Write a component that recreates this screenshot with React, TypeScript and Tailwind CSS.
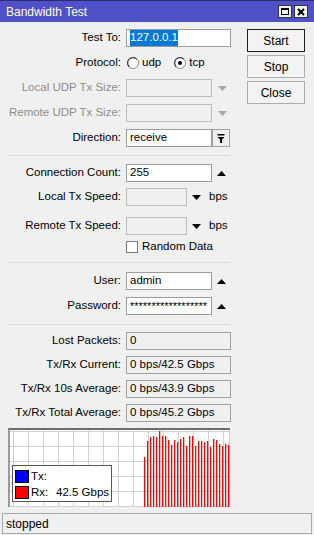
import { ReactNode } from "react";
import clsx from "clsx";

const rxBars = [27, 11, 7, 6, 7, 1, 6, 6, 10, 15, 10, 12, 9, 7, 16, 6, 6, 16, 11, 11, 12, 11, 17, 9, 10, 14, 16, 14, 15];

const Tri = ({ up, gray }: { up?: boolean; gray?: boolean }) => (
  <svg width="9" height="5" viewBox="0 0 9 5" className="shrink-0">
    <polygon
      points={up ? "0,5 9,5 4.5,0" : "0,0 9,0 4.5,5"}
      fill={gray ? "#a8a8a8" : "#000"}
    />
  </svg>
);

const Label = ({ children, disabled }: { children: ReactNode; disabled?: boolean }) => (
  <div className={clsx("w-[121px] shrink-0 text-right whitespace-nowrap", disabled && "text-[#8d8d8d]")}>
    {children}
  </div>
);

const Row = ({ label, disabled, className, children }: { label: string; disabled?: boolean; className?: string; children: ReactNode }) => (
  <div className={clsx("flex items-center h-[18px]", className)}>
    <Label disabled={disabled}>{label}</Label>
    <div className="ml-[5px] flex items-center">{children}</div>
  </div>
);

const Field = ({ w, kind = "edit", children }: { w: string; kind?: "edit" | "off" | "read"; children?: ReactNode }) => (
  <div
    className={clsx(
      "h-[18px] border px-[3px] flex items-center overflow-hidden whitespace-nowrap",
      w,
      kind === "edit" && "bg-white border-[#9c9c9c]",
      kind === "off" && "bg-[#f0f0f0] border-[#bcbcbc]",
      kind === "read" && "bg-[#f0f0f0] border-[#a0a0a0]"
    )}
  >
    {children}
  </div>
);

const Radio = ({ on }: { on?: boolean }) => (
  <svg width="12" height="12" viewBox="0 0 12 12" className="shrink-0">
    <circle cx="6" cy="6" r="5.5" fill="#fff" stroke="#8a8a8a" />
    <path d="M2.2 9.8 A5.2 5.2 0 0 1 9.8 2.2" fill="none" stroke="#404040" strokeWidth="1.2" />
    {on && <circle cx="6" cy="6" r="2" fill="#000" />}
  </svg>
);

const Sep = ({ className }: { className?: string }) => (
  <div className={clsx("ml-[9px] w-[221px] h-px bg-[#d9d9d9]", className)} />
);

const Btn = ({ children, main }: { children: ReactNode; main?: boolean }) => (
  <div
    className={clsx(
      "w-[58px] h-[23px] flex items-center justify-center text-[12px] bg-[#f3f3f3] border",
      main ? "border-[#1e1e1e]" : "border-[#adadad]"
    )}
  >
    {children}
  </div>
);

const Graph = () => (
  <div className="relative ml-[8px] mt-[6px] w-[222px] h-[79px] border-t-2 border-l-2 border-t-[#6e6e6e] border-l-[#9a9a9a] bg-white">
    <svg width="220" height="77" viewBox="0 0 220 77" className="block">
      {Array.from({ length: 15 }, (_, i) => (
        <line key={"v" + i} x1={3.5 + i * 15} y1="0" x2={3.5 + i * 15} y2="77" stroke="#d2d2d2" />
      ))}
      {[1, 16, 31, 46, 61, 76].map((y) => (
        <line key={"h" + y} x1="0" y1={y + 0.5} x2="220" y2={y + 0.5} stroke="#d2d2d2" />
      ))}
      <line x1="219.5" y1="0" x2="219.5" y2="77" stroke="#cfcfcf" />
      {rxBars.map((top, i) => (
        <rect key={i} x={134 + i * 3} y={top} width="1.3" height={77 - top} fill="#ff0000" />
      ))}
    </svg>
    <div className="absolute left-[2px] top-[35px] w-[100px] h-[37px] bg-white border border-[#555] flex flex-col gap-[3px] pt-[4px] pl-[2px] text-[11.5px]">
      <div className="flex items-center h-[13px]">
        <div className="w-[14px] h-[13px] bg-[#0000ff] border border-black" />
        <span className="ml-[2px]">Tx:</span>
      </div>
      <div className="flex items-center h-[13px]">
        <div className="w-[14px] h-[13px] bg-[#ff0000] border border-black" />
        <span className="ml-[2px] w-[25px]">Rx:</span>
        <span>42.5 Gbps</span>
      </div>
    </div>
  </div>
);

export default function App() {
  return (
    <div className="w-[314px] h-[535px] bg-[#f0f0f0] flex flex-col overflow-hidden text-[11.5px] text-black font-['Liberation_Sans',Arial,sans-serif]">
      <div className="h-[22px] shrink-0 bg-[#5050c8] border-t border-[#2c2c6e] flex items-center pl-[6px] pr-[6px]">
        <span className="text-white text-[12px]">Bandwidth Test</span>
        <div className="ml-auto flex gap-[2px]">
          <div className="w-[14px] h-[13px] bg-[#f0f0f0] border border-[#333] flex items-center justify-center">
            <div className="w-[8px] h-[7px] border border-black border-t-2" />
          </div>
          <div className="w-[14px] h-[13px] bg-[#f0f0f0] border border-[#333] flex items-center justify-center">
            <svg width="8" height="8" viewBox="0 0 8 8">
              <path d="M1 1 L7 7 M7 1 L1 7" stroke="#000" strokeWidth="2" />
            </svg>
          </div>
        </div>
      </div>

      <div className="flex flex-1">
        <div className="w-[240px] flex flex-col pt-[7px]">
          <div className="flex flex-col gap-[7px]">
            <Row label="Test To:">
              <Field w="w-[105px]">
                <span className="bg-[#0078d7] text-white">127.0.0.1</span>
              </Field>
            </Row>
            <Row label="Protocol:">
              <div className="flex items-center pl-[1px]">
                <Radio />
                <span className="ml-[3px]">udp</span>
                <span className="ml-[13px]"><Radio on /></span>
                <span className="ml-[3px]">tcp</span>
              </div>
            </Row>
            <Row label="Local UDP Tx Size:" disabled>
              <Field w="w-[86px]" kind="off" />
              <span className="ml-[6px]"><Tri gray /></span>
            </Row>
            <Row label="Remote UDP Tx Size:" disabled>
              <Field w="w-[86px]" kind="off" />
              <span className="ml-[6px]"><Tri gray /></span>
            </Row>
            <Row label="Direction:">
              <Field w="w-[86px]">receive</Field>
              <div className="w-[18px] h-[18px] border border-[#a0a0a0] bg-[#f0f0f0] flex items-center justify-center">
                <svg width="8" height="9" viewBox="0 0 8 9">
                  <rect x="0.5" y="0" width="7" height="1.5" fill="#000" />
                  <polygon points="0.5,3 7.5,3 4,6.5" fill="#000" />
                  <rect x="3" y="6" width="2" height="3" fill="#000" />
                </svg>
              </div>
            </Row>
          </div>

          <Sep className="mt-[8px]" />

          <Row label="Connection Count:" className="mt-[8px]">
            <Field w="w-[86px]">255</Field>
            <span className="ml-[5px]"><Tri up /></span>
          </Row>
          <Row label="Local Tx Speed:" className="mt-[6px]">
            <Field w="w-[61px]" kind="off" />
            <span className="ml-[5px]"><Tri /></span>
            <span className="ml-[8px]">bps</span>
          </Row>
          <Row label="Remote Tx Speed:" className="mt-[11px]">
            <Field w="w-[61px]" kind="off" />
            <span className="ml-[5px]"><Tri /></span>
            <span className="ml-[8px]">bps</span>
          </Row>
          <div className="flex items-center h-[13px] mt-[5px] ml-[126px]">
            <div className="w-[12px] h-[12px] bg-white border border-[#7a7a7a]" />
            <span className="ml-[4px]">Random Data</span>
          </div>

          <Sep className="mt-[9px]" />

          <Row label="User:" className="mt-[9px]">
            <Field w="w-[86px]">admin</Field>
            <span className="ml-[5px]"><Tri up /></span>
          </Row>
          <Row label="Password:" className="mt-[7px]">
            <Field w="w-[86px]">
              <span className="text-[11px]">{"*".repeat(18)}</span>
            </Field>
            <span className="ml-[5px]"><Tri up /></span>
          </Row>

          <Sep className="mt-[9px]" />

          <div className="flex flex-col gap-[6px] mt-[7px]">
            <Row label="Lost Packets:">
              <Field w="w-[105px]" kind="read">0</Field>
            </Row>
            <Row label="Tx/Rx Current:">
              <Field w="w-[105px]" kind="read">0 bps/42.5 Gbps</Field>
            </Row>
            <Row label="Tx/Rx 10s Average:">
              <Field w="w-[105px]" kind="read">0 bps/43.9 Gbps</Field>
            </Row>
            <Row label="Tx/Rx Total Average:">
              <Field w="w-[105px]" kind="read">0 bps/45.2 Gbps</Field>
            </Row>
          </div>

          <Graph />
        </div>

        <div className="flex flex-col gap-[3px] pt-[7px] ml-[7px]">
          <Btn main>Start</Btn>
          <Btn>Stop</Btn>
          <Btn>Close</Btn>
        </div>
      </div>

      <div className="h-[21px] shrink-0 mx-[2px] mb-[1px] border border-[#a8a8a8] flex items-center pl-[3px] text-[12px]">
        stopped
      </div>
    </div>
  );
}
